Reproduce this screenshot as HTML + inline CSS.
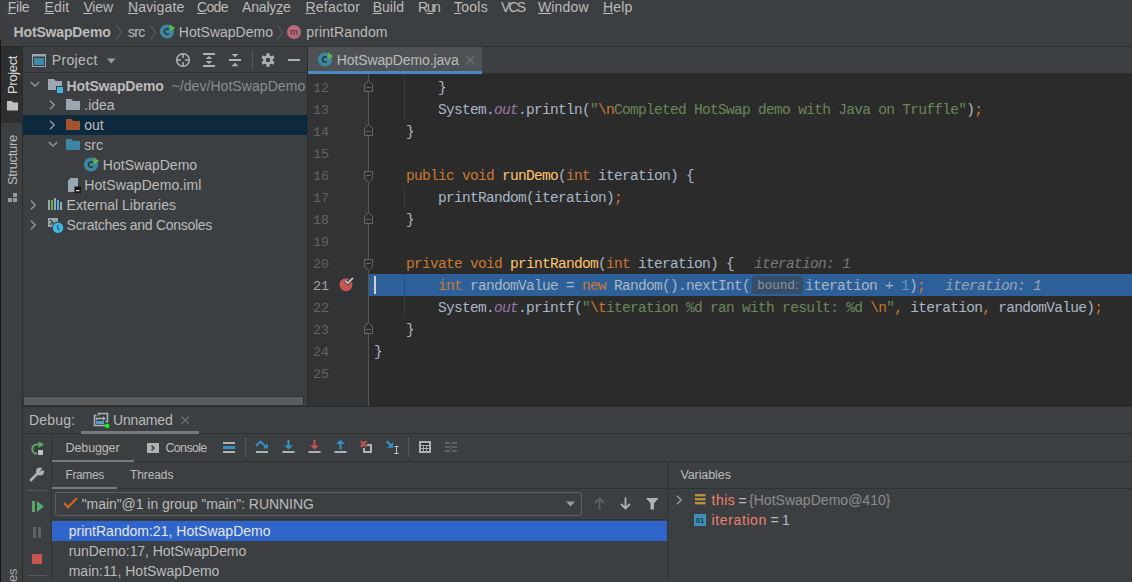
<!DOCTYPE html>
<html><head><meta charset="utf-8"><style>
html,body{margin:0;padding:0;}
body{width:1132px;height:582px;overflow:hidden;position:relative;background:#3c3f41;font-family:"Liberation Sans",sans-serif;}
.a{position:absolute;}
.t{white-space:pre;}
.m{font-family:"Liberation Mono",monospace;font-size:14.5px;letter-spacing:-0.7px;line-height:22px;white-space:pre;color:#a9b7c6;}
u{text-decoration:underline;text-underline-offset:1px;text-decoration-thickness:1px;}
svg{display:block;overflow:visible;}
</style></head><body>
<div class="a" style="left:0px;top:0px;width:1px;height:40px;background:#3d393c;"></div>
<div class="a t" style="left:7.70px;top:0px;font-size:14px;line-height:14px;color:#bbbbbb;letter-spacing:-0.233px;"><u>F</u>ile</div>
<div class="a t" style="left:44.40px;top:0px;font-size:14px;line-height:14px;color:#bbbbbb;letter-spacing:0.200px;"><u>E</u>dit</div>
<div class="a t" style="left:83.40px;top:0px;font-size:14px;line-height:14px;color:#bbbbbb;letter-spacing:-0.133px;"><u>V</u>iew</div>
<div class="a t" style="left:128.00px;top:0px;font-size:14px;line-height:14px;color:#bbbbbb;letter-spacing:0.143px;"><u>N</u>avigate</div>
<div class="a t" style="left:197.00px;top:0px;font-size:14px;line-height:14px;color:#bbbbbb;letter-spacing:-0.667px;"><u>C</u>ode</div>
<div class="a t" style="left:242.00px;top:0px;font-size:14px;line-height:14px;color:#bbbbbb;letter-spacing:-0.167px;">Analy<u>z</u>e</div>
<div class="a t" style="left:305.50px;top:0px;font-size:14px;line-height:14px;color:#bbbbbb;letter-spacing:0.214px;"><u>R</u>efactor</div>
<div class="a t" style="left:372.70px;top:0px;font-size:14px;line-height:14px;color:#bbbbbb;letter-spacing:0.025px;"><u>B</u>uild</div>
<div class="a t" style="left:417.90px;top:0px;font-size:14px;line-height:14px;color:#bbbbbb;letter-spacing:-1.350px;">R<u>u</u>n</div>
<div class="a t" style="left:454.00px;top:0px;font-size:14px;line-height:14px;color:#bbbbbb;letter-spacing:0.250px;"><u>T</u>ools</div>
<div class="a t" style="left:501.00px;top:0px;font-size:14px;line-height:14px;color:#bbbbbb;letter-spacing:-1.800px;">VCS</div>
<div class="a t" style="left:538.00px;top:0px;font-size:14px;line-height:14px;color:#bbbbbb;letter-spacing:0.140px;"><u>W</u>indow</div>
<div class="a t" style="left:603.00px;top:0px;font-size:14px;line-height:14px;color:#bbbbbb;letter-spacing:0.133px;"><u>H</u>elp</div>
<div class="a t" style="left:13.60px;top:25px;font-size:14px;line-height:14px;color:#bbbbbb;font-weight:bold;letter-spacing:-0.160px;">HotSwapDemo</div>
<svg class="a" style="left:116px;top:25px" width="8" height="15" viewBox="0 0 8 15"><path d="M0.5 0.5 L5.5 7.5 L0.5 14.5" fill="none" stroke="#5f6265" stroke-width="1"/></svg>
<div class="a t" style="left:128.00px;top:25px;font-size:14px;line-height:14px;color:#bbbbbb;letter-spacing:-0.700px;">src</div>
<svg class="a" style="left:150px;top:25px" width="8" height="15" viewBox="0 0 8 15"><path d="M0.5 0.5 L5.5 7.5 L0.5 14.5" fill="none" stroke="#5f6265" stroke-width="1"/></svg>
<svg class="a" style="left:159px;top:22.9px" width="17" height="17" viewBox="0 0 17 17"><circle cx="8" cy="8.5" r="7.1" fill="#3d87a1"/><path d="M9.7 6.5 A2.6 2.6 0 1 0 9.7 10.5" fill="none" stroke="#263238" stroke-width="1.3"/><path d="M10.8 1.3 L16.1 4.9 L10.8 8.5 Z" fill="#5fb641"/></svg>
<div class="a t" style="left:178.80px;top:25px;font-size:14px;line-height:14px;color:#bbbbbb;">HotSwapDemo</div>
<svg class="a" style="left:277px;top:25px" width="8" height="15" viewBox="0 0 8 15"><path d="M0.5 0.5 L5.5 7.5 L0.5 14.5" fill="none" stroke="#5f6265" stroke-width="1"/></svg>
<svg class="a" style="left:286px;top:24px" width="16" height="16" viewBox="0 0 16 16"><circle cx="8" cy="8" r="7" fill="#b86a7c"/><text x="8" y="11.3" font-family="Liberation Sans" font-size="9.5" fill="#3a2a2e" text-anchor="middle">m</text></svg>
<div class="a t" style="left:306.30px;top:25px;font-size:14px;line-height:14px;color:#bbbbbb;letter-spacing:0.100px;">printRandom</div>
<div class="a" style="left:0px;top:46px;width:1132px;height:1px;background:#323232;"></div>
<div class="a" style="left:1px;top:46px;width:22px;height:1px;background:#262626;"></div>
<div class="a" style="left:1px;top:47px;width:21px;height:536px;background:#3c3f41;"></div>
<div class="a" style="left:0px;top:40px;width:1px;height:542px;background:#151314;"></div>
<div class="a" style="left:22px;top:47px;width:1px;height:536px;background:#2b2b2b;"></div>
<div class="a" style="left:1px;top:47px;width:21px;height:76px;background:#2d2f30;"></div>
<div class="a t" style="left:6px;top:94px;font-size:13px;line-height:13px;color:#dadada;letter-spacing:-0.333px;transform:rotate(-90deg);transform-origin:0 0">Project</div>
<svg class="a" style="left:7px;top:101px" width="12" height="10" viewBox="0 0 12 10"><path d="M0 0 H5 L6 1.5 H11 V9.5 H0 Z" fill="#c0c0c0"/></svg>
<div class="a t" style="left:6px;top:185px;font-size:13px;line-height:13px;color:#bdbdbd;letter-spacing:-0.312px;transform:rotate(-90deg);transform-origin:0 0">Structure</div>
<svg class="a" style="left:8px;top:193px" width="10" height="9" viewBox="0 0 10 9"><rect x="5" y="0" width="4" height="4" fill="#9a9a9a"/><rect x="0" y="5" width="4" height="4" fill="#9a9a9a"/><rect x="5" y="5" width="4" height="4" fill="#9a9a9a"/></svg>
<div class="a t" style="left:6px;top:620px;font-size:13px;line-height:13px;color:#a8a8a8;letter-spacing:-0.250px;transform:rotate(-90deg);transform-origin:0 0">Favorites</div>
<div class="a" style="left:23px;top:47px;width:284px;height:359px;background:#3c3f41;"></div>
<div class="a" style="left:23px;top:72px;width:284px;height:1px;background:#323232;"></div>
<div class="a" style="left:307px;top:47px;width:1px;height:359px;background:#2b2b2b;"></div>
<svg class="a" style="left:32px;top:54px" width="14" height="13" viewBox="0 0 14 13"><rect x="0.5" y="0.5" width="13" height="12" fill="none" stroke="#9aa7b0" stroke-width="1"/><rect x="0.5" y="0.5" width="13" height="2" fill="#9aa7b0"/><rect x="2" y="4" width="10" height="7" fill="#3a8aaa"/></svg>
<div class="a t" style="left:51.80px;top:53px;font-size:14px;line-height:14px;color:#bbbbbb;letter-spacing:0.333px;">Project</div>
<svg class="a" style="left:107px;top:58px" width="9" height="6" viewBox="0 0 9 6"><path d="M0 0.5 H8.5 L4.25 5.5 Z" fill="#9a9da0"/></svg>
<svg class="a" style="left:175px;top:52px" width="16" height="16" viewBox="0 0 16 16"><circle cx="8" cy="8" r="6.3" fill="none" stroke="#afb1b3" stroke-width="1.5"/><path d="M8 1.5 V6 M8 10 V14.5 M1.5 8 H6 M10 8 H14.5" stroke="#afb1b3" stroke-width="1.5"/></svg>
<svg class="a" style="left:203px;top:53px" width="12" height="14" viewBox="0 0 12 14"><g fill="#afb1b3"><rect x="0" y="0" width="12" height="2"/><rect x="0" y="12" width="12" height="2"/><path d="M6 3 L9.3 6.1 H2.7 Z M2.7 8 H9.3 L6 10.9 Z"/></g></svg>
<svg class="a" style="left:229px;top:53px" width="12" height="14" viewBox="0 0 12 14"><g fill="#afb1b3"><rect x="0" y="6" width="12" height="2"/><path d="M2.6 1 H9.4 L6 4.3 Z M6 9.7 L9.4 13.2 H2.6 Z"/></g></svg>
<div class="a" style="left:252px;top:50px;width:1px;height:20px;background:#555859;"></div>
<svg class="a" style="left:261px;top:53px" width="14" height="14" viewBox="0 0 14 14"><g fill="#afb1b3"><circle cx="7" cy="7" r="4.7"/><rect x="5.4" y="0.2" width="3.2" height="3.5" rx="0.6" transform="rotate(0 7 7)"/><rect x="5.4" y="0.2" width="3.2" height="3.5" rx="0.6" transform="rotate(60 7 7)"/><rect x="5.4" y="0.2" width="3.2" height="3.5" rx="0.6" transform="rotate(120 7 7)"/><rect x="5.4" y="0.2" width="3.2" height="3.5" rx="0.6" transform="rotate(180 7 7)"/><rect x="5.4" y="0.2" width="3.2" height="3.5" rx="0.6" transform="rotate(240 7 7)"/><rect x="5.4" y="0.2" width="3.2" height="3.5" rx="0.6" transform="rotate(300 7 7)"/></g><circle cx="7" cy="7" r="2.3" fill="#3c3f41"/></svg>
<div class="a" style="left:288px;top:59px;width:12px;height:2px;background:#afb1b3;"></div>
<div class="a" style="left:23px;top:115px;width:284px;height:20px;background:#0d293e;"></div>
<svg class="a" style="left:30px;top:81px" width="10" height="7" viewBox="0 0 10 7"><path d="M0.8 1 L5 5.2 L9.2 1" fill="none" stroke="#9a9da0" stroke-width="1.3"/></svg>
<svg class="a" style="left:48px;top:79px" width="16" height="14" viewBox="0 0 16 14"><path d="M0 0 H6 L7.5 2 H14 V7 H8 V11 H0 Z" fill="#9aa7b0"/><rect x="9" y="8" width="6" height="6" fill="#40b6e0"/></svg>
<div class="a t" style="left:66.60px;top:79px;font-size:14px;line-height:14px;color:#bbbbbb;font-weight:bold;letter-spacing:-0.160px;">HotSwapDemo</div>
<div class="a t" style="left:171.50px;top:79px;font-size:14px;line-height:14px;color:#8a8d90;letter-spacing:0.062px;">~/dev/HotSwapDemo</div>
<svg class="a" style="left:49px;top:100px" width="7" height="10" viewBox="0 0 7 10"><path d="M1 0.8 L5.2 5 L1 9.2" fill="none" stroke="#9a9da0" stroke-width="1.3"/></svg>
<svg class="a" style="left:66px;top:99px" width="14" height="11" viewBox="0 0 14 11"><path d="M0 0 H5.5 L7 2 H14 V11 H0 Z" fill="#9aa7b0"/></svg>
<div class="a t" style="left:84.30px;top:98px;font-size:14px;line-height:14px;color:#bbbbbb;">.idea</div>
<svg class="a" style="left:49px;top:120px" width="7" height="10" viewBox="0 0 7 10"><path d="M1 0.8 L5.2 5 L1 9.2" fill="none" stroke="#9a9da0" stroke-width="1.3"/></svg>
<svg class="a" style="left:66px;top:119px" width="14" height="11" viewBox="0 0 14 11"><path d="M0 0 H5.5 L7 2 H14 V11 H0 Z" fill="#a3532d"/></svg>
<div class="a t" style="left:84.30px;top:118px;font-size:14px;line-height:14px;color:#bbbbbb;">out</div>
<svg class="a" style="left:48px;top:141px" width="10" height="7" viewBox="0 0 10 7"><path d="M0.8 1 L5 5.2 L9.2 1" fill="none" stroke="#9a9da0" stroke-width="1.3"/></svg>
<svg class="a" style="left:66px;top:139px" width="14" height="11" viewBox="0 0 14 11"><path d="M0 0 H5.5 L7 2 H14 V11 H0 Z" fill="#3c86a4"/></svg>
<div class="a t" style="left:84.30px;top:138px;font-size:14px;line-height:14px;color:#bbbbbb;">src</div>
<svg class="a" style="left:82.8px;top:155.9px" width="17" height="17" viewBox="0 0 17 17"><circle cx="8" cy="8.5" r="7.1" fill="#3d87a1"/><path d="M9.7 6.5 A2.6 2.6 0 1 0 9.7 10.5" fill="none" stroke="#263238" stroke-width="1.3"/><path d="M10.8 1.3 L16.1 4.9 L10.8 8.5 Z" fill="#5fb641"/></svg>
<div class="a t" style="left:102.80px;top:158px;font-size:14px;line-height:14px;color:#bbbbbb;letter-spacing:0.020px;">HotSwapDemo</div>
<svg class="a" style="left:68px;top:178px" width="13" height="15" viewBox="0 0 13 15"><path d="M2.5 0 H10 V14 H0 V2.5 Z" fill="#9aa7b0"/><path d="M0 2 L2 0" stroke="#3c3f41" stroke-width="1"/><rect x="6.5" y="8.5" width="6.5" height="6.5" fill="#161616"/><rect x="8" y="12" width="3.5" height="1.2" fill="#e0e0e0"/></svg>
<div class="a t" style="left:84.20px;top:178px;font-size:14px;line-height:14px;color:#bbbbbb;letter-spacing:0.093px;">HotSwapDemo.iml</div>
<svg class="a" style="left:30px;top:200px" width="7" height="10" viewBox="0 0 7 10"><path d="M1 0.8 L5.2 5 L1 9.2" fill="none" stroke="#9a9da0" stroke-width="1.3"/></svg>
<svg class="a" style="left:48px;top:198px" width="14" height="12" viewBox="0 0 14 12"><rect x="0" y="2" width="2" height="10" fill="#9aa7b0"/><rect x="3" y="2" width="2" height="10" fill="#62b543"/><rect x="6" y="0" width="2" height="12" fill="#9aa7b0"/><rect x="9" y="2" width="2" height="10" fill="#40b6e0"/><rect x="12" y="4" width="2" height="8" fill="#9aa7b0"/></svg>
<div class="a t" style="left:66.60px;top:198px;font-size:14px;line-height:14px;color:#bbbbbb;letter-spacing:0.024px;">External Libraries</div>
<svg class="a" style="left:30px;top:220px" width="7" height="10" viewBox="0 0 7 10"><path d="M1 0.8 L5.2 5 L1 9.2" fill="none" stroke="#9a9da0" stroke-width="1.3"/></svg>
<svg class="a" style="left:48px;top:218px" width="16" height="16" viewBox="0 0 16 16"><rect x="0" y="0" width="10" height="9" fill="#9aa7b0"/><path d="M1.8 1.8 L5 4.3 L1.8 6.8" fill="none" stroke="#3c3f41" stroke-width="1.2"/><circle cx="10" cy="9.7" r="6.3" fill="#3c3f41"/><circle cx="10" cy="9.7" r="5.3" fill="#40b6e0"/><path d="M9.6 7 V10.2 L11.6 12" fill="none" stroke="#2d5a6e" stroke-width="1.1"/></svg>
<div class="a t" style="left:66.60px;top:218px;font-size:14px;line-height:14px;color:#bbbbbb;letter-spacing:-0.286px;">Scratches and Consoles</div>
<div class="a" style="left:23px;top:396px;width:281px;height:10px;background:#323436;"></div>
<div class="a" style="left:24px;top:397px;width:279px;height:8px;background:#5a5c5e;"></div>
<div class="a" style="left:308px;top:47px;width:824px;height:27px;background:#3c3f41;"></div>
<div class="a" style="left:308px;top:47px;width:174px;height:24px;background:#4e5254;"></div>
<div class="a" style="left:308px;top:71px;width:174px;height:3px;background:#4a88c7;"></div>
<div class="a" style="left:482px;top:73px;width:650px;height:1px;background:#313131;"></div>
<svg class="a" style="left:316.5px;top:50.9px" width="17" height="17" viewBox="0 0 17 17"><circle cx="8" cy="8.5" r="7.1" fill="#3d87a1"/><path d="M9.7 6.5 A2.6 2.6 0 1 0 9.7 10.5" fill="none" stroke="#263238" stroke-width="1.3"/><path d="M10.8 1.3 L16.1 4.9 L10.8 8.5 Z" fill="#5fb641"/></svg>
<div class="a t" style="left:336.80px;top:53px;font-size:14px;line-height:14px;color:#bbbbbb;letter-spacing:-0.120px;">HotSwapDemo.java</div>
<svg class="a" style="left:466px;top:56px" width="9" height="9" viewBox="0 0 9 9"><path d="M0.5 0.5 L8 8 M8 0.5 L0.5 8" stroke="#6e7072" stroke-width="1.2"/></svg>
<div class="a" style="left:308px;top:74px;width:61px;height:332px;background:#313335;"></div>
<div class="a" style="left:369px;top:74px;width:763px;height:332px;background:#2b2b2b;"></div>
<div class="a" style="left:368px;top:74px;width:1px;height:332px;background:#555555;"></div>
<div class="a" style="left:369px;top:274px;width:763px;height:22px;background:#2d6099;"></div>
<div class="a" style="left:404px;top:74px;width:1px;height:46px;background:#393939;"></div>
<div class="a" style="left:404px;top:186px;width:1px;height:22px;background:#393939;"></div>
<div class="a" style="left:404px;top:274px;width:1px;height:44px;background:#393939;"></div>
<div class="a" style="left:404px;top:274px;width:1px;height:22px;background:#26507d;"></div>
<div class="a" style="left:374px;top:276px;width:2px;height:18px;background:#d0d0d0;"></div>
<svg class="a" style="left:364px;top:80px" width="9" height="12" viewBox="0 0 9 12"><defs><linearGradient id="fg" x1="0" x2="1"><stop offset="0.5" stop-color="#313335"/><stop offset="0.5" stop-color="#2b2b2b"/></linearGradient></defs><path d="M4.5 0.5 L8.5 4.2 V11.5 H0.5 V4.2 Z" fill="url(#fg)" stroke="#666767" stroke-width="1"/><path d="M2.3 7.5 H6.7" stroke="#666767" stroke-width="1"/></svg>
<svg class="a" style="left:364px;top:124px" width="9" height="12" viewBox="0 0 9 12"><defs><linearGradient id="fg" x1="0" x2="1"><stop offset="0.5" stop-color="#313335"/><stop offset="0.5" stop-color="#2b2b2b"/></linearGradient></defs><path d="M4.5 0.5 L8.5 4.2 V11.5 H0.5 V4.2 Z" fill="url(#fg)" stroke="#666767" stroke-width="1"/><path d="M2.3 7.5 H6.7" stroke="#666767" stroke-width="1"/></svg>
<svg class="a" style="left:364px;top:212px" width="9" height="12" viewBox="0 0 9 12"><defs><linearGradient id="fg" x1="0" x2="1"><stop offset="0.5" stop-color="#313335"/><stop offset="0.5" stop-color="#2b2b2b"/></linearGradient></defs><path d="M4.5 0.5 L8.5 4.2 V11.5 H0.5 V4.2 Z" fill="url(#fg)" stroke="#666767" stroke-width="1"/><path d="M2.3 7.5 H6.7" stroke="#666767" stroke-width="1"/></svg>
<svg class="a" style="left:364px;top:322px" width="9" height="12" viewBox="0 0 9 12"><defs><linearGradient id="fg" x1="0" x2="1"><stop offset="0.5" stop-color="#313335"/><stop offset="0.5" stop-color="#2b2b2b"/></linearGradient></defs><path d="M4.5 0.5 L8.5 4.2 V11.5 H0.5 V4.2 Z" fill="url(#fg)" stroke="#666767" stroke-width="1"/><path d="M2.3 7.5 H6.7" stroke="#666767" stroke-width="1"/></svg>
<svg class="a" style="left:364px;top:171px" width="9" height="12" viewBox="0 0 9 12"><path d="M0.5 0.5 H8.5 V7.8 L4.5 11.5 L0.5 7.8 Z" fill="url(#fg)" stroke="#666767" stroke-width="1"/><path d="M2.3 4.5 H6.7" stroke="#666767" stroke-width="1"/></svg>
<svg class="a" style="left:364px;top:259px" width="9" height="12" viewBox="0 0 9 12"><path d="M0.5 0.5 H8.5 V7.8 L4.5 11.5 L0.5 7.8 Z" fill="url(#fg)" stroke="#666767" stroke-width="1"/><path d="M2.3 4.5 H6.7" stroke="#666767" stroke-width="1"/></svg>
<div class="a m" style="left:313px;top:78px;color:#606366;font-size:13.333px;letter-spacing:0">12</div>
<div class="a m" style="left:313px;top:100px;color:#606366;font-size:13.333px;letter-spacing:0">13</div>
<div class="a m" style="left:313px;top:122px;color:#606366;font-size:13.333px;letter-spacing:0">14</div>
<div class="a m" style="left:313px;top:144px;color:#606366;font-size:13.333px;letter-spacing:0">15</div>
<div class="a m" style="left:313px;top:166px;color:#606366;font-size:13.333px;letter-spacing:0">16</div>
<div class="a m" style="left:313px;top:188px;color:#606366;font-size:13.333px;letter-spacing:0">17</div>
<div class="a m" style="left:313px;top:210px;color:#606366;font-size:13.333px;letter-spacing:0">18</div>
<div class="a m" style="left:313px;top:232px;color:#606366;font-size:13.333px;letter-spacing:0">19</div>
<div class="a m" style="left:313px;top:254px;color:#606366;font-size:13.333px;letter-spacing:0">20</div>
<div class="a m" style="left:313px;top:276px;color:#a4a3a3;font-size:13.333px;letter-spacing:0">21</div>
<div class="a m" style="left:313px;top:298px;color:#606366;font-size:13.333px;letter-spacing:0">22</div>
<div class="a m" style="left:313px;top:320px;color:#606366;font-size:13.333px;letter-spacing:0">23</div>
<div class="a m" style="left:313px;top:342px;color:#606366;font-size:13.333px;letter-spacing:0">24</div>
<div class="a m" style="left:313px;top:364px;color:#606366;font-size:13.333px;letter-spacing:0">25</div>
<svg class="a" style="left:338px;top:275px" width="17" height="17" viewBox="0 0 17 17"><circle cx="8" cy="9.7" r="6.5" fill="#c75450"/><path d="M7 5.6 L9.7 8.2 L15 2.8" fill="none" stroke="#2b2b2b" stroke-width="3.4"/><path d="M7 5.6 L9.7 8.2 L15 2.8" fill="none" stroke="#c8c8c8" stroke-width="1.7"/></svg>
<div class="a m" style="left:374px;top:77px"><span style="color:#a9b7c6;">        }</span></div>
<div class="a m" style="left:374px;top:99px"><span style="color:#a9b7c6;">        System.</span><span style="color:#9876aa;font-style:italic">out</span><span style="color:#a9b7c6;">.println(</span><span style="color:#6a8759;">&quot;</span><span style="color:#cc7832;">\n</span><span style="color:#6a8759;">Completed HotSwap demo with Java on Truffle&quot;</span><span style="color:#a9b7c6;">)</span><span style="color:#cc7832;">;</span></div>
<div class="a m" style="left:374px;top:121px"><span style="color:#a9b7c6;">    }</span></div>
<div class="a m" style="left:374px;top:165px"><span style="color:#a9b7c6;">    </span><span style="color:#cc7832;">public void </span><span style="color:#ffc66d;">runDemo</span><span style="color:#a9b7c6;">(</span><span style="color:#cc7832;">int </span><span style="color:#a9b7c6;">iteration) {</span></div>
<div class="a m" style="left:374px;top:187px"><span style="color:#a9b7c6;">        printRandom(iteration)</span><span style="color:#cc7832;">;</span></div>
<div class="a m" style="left:374px;top:209px"><span style="color:#a9b7c6;">    }</span></div>
<div class="a m" style="left:374px;top:253px"><span style="color:#a9b7c6;">    </span><span style="color:#cc7832;">private void </span><span style="color:#ffc66d;">printRandom</span><span style="color:#a9b7c6;">(</span><span style="color:#cc7832;">int </span><span style="color:#a9b7c6;">iteration) {</span></div>
<div class="a m" style="left:374px;top:275px"><span style="color:#a9b7c6;">        </span><span style="color:#cc7832;">int </span><span style="color:#a9b7c6;">randomValue = </span><span style="color:#cc7832;">new </span><span style="color:#a9b7c6;">Random().nextInt(</span></div>
<div class="a m" style="left:374px;top:297px"><span style="color:#a9b7c6;">        System.</span><span style="color:#9876aa;font-style:italic">out</span><span style="color:#a9b7c6;">.printf(</span><span style="color:#6a8759;">&quot;</span><span style="color:#cc7832;">\t</span><span style="color:#6a8759;">iteration %d ran with result: %d </span><span style="color:#cc7832;">\n</span><span style="color:#6a8759;">&quot;</span><span style="color:#cc7832;">, </span><span style="color:#a9b7c6;">iteration</span><span style="color:#cc7832;">, </span><span style="color:#a9b7c6;">randomValue)</span><span style="color:#cc7832;">;</span></div>
<div class="a m" style="left:374px;top:319px"><span style="color:#a9b7c6;">    }</span></div>
<div class="a m" style="left:374px;top:341px"><span style="color:#a9b7c6;">}</span></div>
<div class="a" style="left:752px;top:276px;width:51px;height:18px;border-radius:3px;background:#354d69"></div>
<div class="a t" style="left:757.50px;top:279px;font-size:12.5px;line-height:12.5px;color:#8e9399;letter-spacing:0.600px;">bound:</div>
<div class="a m" style="left:805px;top:275px"><span style="color:#a9b7c6;">iteration + </span><span style="color:#6897bb;">1</span><span style="color:#a9b7c6;">)</span><span style="color:#cc7832;">;</span></div>
<div class="a m" style="left:945px;top:275px;color:#9aa6b4;font-style:italic">iteration: 1</div>
<div class="a m" style="left:754px;top:253px;color:#787878;font-style:italic">iteration: 1</div>
<div class="a" style="left:23px;top:406px;width:1109px;height:1px;background:#2c2c2c;"></div>
<div class="a" style="left:23px;top:407px;width:1109px;height:175px;background:#3c3f41;"></div>
<div class="a" style="left:23px;top:433px;width:1109px;height:1px;background:#323232;"></div>
<div class="a t" style="left:29.00px;top:413px;font-size:14px;line-height:14px;color:#bbbbbb;letter-spacing:0.200px;">Debug:</div>
<svg class="a" style="left:93px;top:412px" width="17" height="17" viewBox="0 0 17 17"><g fill="none" stroke="#a9b3b9" stroke-width="1.5"><path d="M5.5 3.5 V1.5 H14.5 V9.5 H12.5"/><path d="M3.5 3.5 H1.5 V13.5 H12.5"/><path d="M3.5 8 V6.5 H10.5"/></g><path d="M10 4.2 L12.8 6.5 L10 8.8 Z" fill="#a9b3b9"/><rect x="3" y="9" width="8" height="3" fill="#4a9fc4"/><circle cx="14.2" cy="13.9" r="2.4" fill="#1ee61e"/></svg>
<div class="a t" style="left:113.00px;top:413px;font-size:14px;line-height:14px;color:#bbbbbb;letter-spacing:-0.167px;">Unnamed</div>
<svg class="a" style="left:181px;top:416px" width="9" height="9" viewBox="0 0 9 9"><path d="M0.5 0.5 L8 8 M8 0.5 L0.5 8" stroke="#6e7072" stroke-width="1.1"/></svg>
<div class="a" style="left:81px;top:431px;width:118px;height:3px;background:#747a80;"></div>
<div class="a" style="left:51px;top:434px;width:1px;height:148px;background:#323232;"></div>
<svg class="a" style="left:30px;top:440px" width="16" height="16" viewBox="0 0 16 16"><path d="M9.5 4.5 H7 A4.6 4.6 0 0 0 7 13.8" fill="none" stroke="#59a869" stroke-width="2.2"/><path d="M8.6 1.2 L14.2 4.5 L8.6 8 Z" fill="#59a869"/><rect x="8" y="10" width="5" height="5" fill="#c0c0c0"/></svg>
<svg class="a" style="left:29px;top:467px" width="16" height="15" viewBox="0 0 16 15"><path d="M2 13 L8.5 6.5" stroke="#afb1b3" stroke-width="2.6" stroke-linecap="round"/><path d="M8 3.2 A3.6 3.6 0 1 0 12.3 7.3 L14 5.3 V7 A5 5 0 0 1 11 9.5" fill="none" stroke="#afb1b3" stroke-width="0"/><circle cx="11" cy="4.5" r="4" fill="#afb1b3"/><path d="M11 4.5 L14 0 L16 2.5 Z" fill="#3c3f41"/></svg>
<div class="a" style="left:27px;top:490px;width:20px;height:1px;background:#555859;"></div>
<svg class="a" style="left:32px;top:501px" width="13" height="12" viewBox="0 0 13 12"><rect x="0" y="0" width="3" height="11" fill="#59a869"/><path d="M5 0 L12 5.5 L5 11 Z" fill="#59a869"/></svg>
<div class="a" style="left:33px;top:527px;width:3px;height:11px;background:#5f6163;"></div>
<div class="a" style="left:38px;top:527px;width:3px;height:11px;background:#5f6163;"></div>
<div class="a" style="left:32px;top:554px;width:10px;height:10px;background:#c75450;"></div>
<div class="a" style="left:27px;top:575px;width:20px;height:1px;background:#555859;"></div>
<div class="a" style="left:52px;top:461px;width:1080px;height:1px;background:#323232;"></div>
<div class="a t" style="left:65.60px;top:442px;font-size:12.5px;line-height:12.5px;color:#bbbbbb;letter-spacing:-0.129px;">Debugger</div>
<div class="a" style="left:52px;top:460px;width:82px;height:2px;background:#747a80;"></div>
<svg class="a" style="left:147px;top:443px" width="12" height="10" viewBox="0 0 12 10"><rect width="12" height="10" fill="#afb1b3"/><path d="M4.5 2.5 L7 5 L4.5 7.5" fill="none" stroke="#3c3f41" stroke-width="1.5"/></svg>
<div class="a t" style="left:165.50px;top:442px;font-size:12.5px;line-height:12.5px;color:#bbbbbb;letter-spacing:-0.683px;">Console</div>
<div class="a" style="left:223px;top:442px;width:12px;height:2px;background:#afb1b3;"></div>
<div class="a" style="left:223px;top:446px;width:12px;height:3px;background:#3592c4;"></div>
<div class="a" style="left:223px;top:451px;width:12px;height:2px;background:#afb1b3;"></div>
<div class="a" style="left:245px;top:437px;width:1px;height:20px;background:#555859;"></div>
<svg class="a" style="left:255px;top:440px" width="16" height="15" viewBox="0 0 16 15"><path d="M1 6 L5.5 1.5 L10.5 6.5" fill="none" stroke="#3592c4" stroke-width="1.8"/><path d="M8 8.5 H13 V3.5 Z" fill="#3592c4"/><rect x="1" y="11" width="12" height="2" fill="#afb1b3"/></svg>
<svg class="a" style="left:282px;top:439px" width="14" height="15" viewBox="0 0 14 15"><rect x="5.5" y="1" width="2" height="6" fill="#3592c4"/><path d="M2 6.5 H11 L6.5 10.5 Z" fill="#3592c4"/><rect x="0.5" y="12" width="12" height="2" fill="#afb1b3"/></svg>
<svg class="a" style="left:308px;top:439px" width="14" height="15" viewBox="0 0 14 15"><rect x="5.5" y="1" width="2" height="6" fill="#c75450"/><path d="M2 6.5 H11 L6.5 10.5 Z" fill="#c75450"/><rect x="0.5" y="12" width="12" height="2" fill="#afb1b3"/></svg>
<svg class="a" style="left:334px;top:439px" width="14" height="15" viewBox="0 0 14 15"><rect x="5.5" y="4.5" width="2" height="6" fill="#3592c4"/><path d="M2 5 H11 L6.5 1 Z" fill="#3592c4"/><rect x="0.5" y="12" width="12" height="2" fill="#afb1b3"/></svg>
<svg class="a" style="left:359px;top:440px" width="14" height="14" viewBox="0 0 14 14"><path d="M5 8 V12 H12 V5 H8" fill="none" stroke="#afb1b3" stroke-width="2"/><path d="M1.8 1.3 L7.2 6.7 M7.2 1.3 L1.8 6.7" stroke="#c75450" stroke-width="2"/></svg>
<svg class="a" style="left:385px;top:440px" width="16" height="15" viewBox="0 0 16 15"><path d="M2.2 1.7 L6.5 6" stroke="#3592c4" stroke-width="2.2" stroke-linecap="round"/><path d="M8.1 1.9 V7.8 H2.2 Z" fill="#3592c4"/><path d="M9.3 6.5 H13.7 M11.5 6.5 V13.5 M9.3 13.5 H13.7" fill="none" stroke="#c0c0c0" stroke-width="1.1"/></svg>
<div class="a" style="left:408px;top:437px;width:1px;height:20px;background:#555859;"></div>
<svg class="a" style="left:419px;top:441px" width="12" height="12" viewBox="0 0 12 12"><rect width="12" height="12" fill="#afb1b3"/><g fill="#2e2f30"><rect x="2" y="2" width="8" height="2"/><rect x="2" y="5" width="2" height="2"/><rect x="5" y="5" width="2" height="2"/><rect x="8" y="5" width="2" height="2"/><rect x="2" y="8" width="2" height="2"/><rect x="5" y="8" width="2" height="2"/><rect x="8" y="8" width="2" height="2"/></g></svg>
<svg class="a" style="left:445px;top:441px" width="13" height="13" viewBox="0 0 13 13"><g fill="#5e6062"><rect x="0" y="1" width="5" height="2"/><rect x="7" y="1" width="5" height="2"/><rect x="0" y="5" width="5" height="2"/><rect x="7" y="5" width="5" height="2"/><rect x="0" y="9" width="5" height="2"/><rect x="7" y="9" width="5" height="2"/></g><path d="M7 2 C5.5 2 6 10 4 10" fill="none" stroke="#5e6062" stroke-width="1"/></svg>
<div class="a" style="left:52px;top:488px;width:615px;height:1px;background:#323232;"></div>
<div class="a t" style="left:65.60px;top:469px;font-size:12px;line-height:12px;color:#bbbbbb;letter-spacing:-0.420px;">Frames</div>
<div class="a t" style="left:130.00px;top:469px;font-size:12px;line-height:12px;color:#bbbbbb;letter-spacing:-0.100px;">Threads</div>
<div class="a" style="left:52px;top:487px;width:65px;height:2px;background:#747a80;"></div>
<div class="a" style="left:55px;top:492px;width:525px;height:22px;border:1px solid #5e6060;border-radius:3px;background:#3c3f41"></div>
<svg class="a" style="left:63px;top:497px" width="15" height="12" viewBox="0 0 15 12"><path d="M1 6 L5 10 L14 1" fill="none" stroke="#cf6327" stroke-width="2.3"/></svg>
<div class="a t" style="left:81.70px;top:497px;font-size:14px;line-height:14px;color:#bbbbbb;letter-spacing:-0.059px;">&quot;main&quot;@1 in group &quot;main&quot;: RUNNING</div>
<svg class="a" style="left:566px;top:501px" width="10" height="6" viewBox="0 0 10 6"><path d="M0 0.5 H9 L4.5 5.5 Z" fill="#9a9da0"/></svg>
<svg class="a" style="left:594px;top:497px" width="12" height="13" viewBox="0 0 12 13"><path d="M5.5 12.5 V1.5 M1 6 L5.5 1.5 L10 6" fill="none" stroke="#5e6062" stroke-width="1.8"/></svg>
<svg class="a" style="left:620px;top:497px" width="12" height="13" viewBox="0 0 12 13"><path d="M5.5 0.5 V11.5 M1 7 L5.5 11.5 L10 7" fill="none" stroke="#afb1b3" stroke-width="1.8"/></svg>
<svg class="a" style="left:646px;top:497px" width="13" height="13" viewBox="0 0 13 13"><path d="M0 1 H12.5 L8 6.5 V12.5 H4.5 V6.5 Z" fill="#afb1b3"/></svg>
<div class="a" style="left:52px;top:519px;width:615px;height:1px;background:#323232;"></div>
<div class="a" style="left:52px;top:521px;width:615px;height:20px;background:#2f65ca;"></div>
<div class="a t" style="left:68.70px;top:524px;font-size:14px;line-height:14px;color:#e6e6e6;letter-spacing:0.012px;">printRandom:21, HotSwapDemo</div>
<div class="a t" style="left:68.70px;top:544px;font-size:14px;line-height:14px;color:#bbbbbb;letter-spacing:-0.064px;">runDemo:17, HotSwapDemo</div>
<div class="a t" style="left:68.70px;top:564px;font-size:14px;line-height:14px;color:#bbbbbb;">main:11, HotSwapDemo</div>
<div class="a" style="left:667px;top:462px;width:1px;height:120px;background:#323232;"></div>
<div class="a" style="left:668px;top:488px;width:464px;height:1px;background:#323232;"></div>
<div class="a t" style="left:680.40px;top:469px;font-size:12.5px;line-height:12.5px;color:#bbbbbb;letter-spacing:-0.087px;">Variables</div>
<svg class="a" style="left:676px;top:495px" width="7" height="10" viewBox="0 0 7 10"><path d="M1 0.8 L5.2 5 L1 9.2" fill="none" stroke="#9a9da0" stroke-width="1.3"/></svg>
<svg class="a" style="left:695px;top:494px" width="11" height="11" viewBox="0 0 11 11"><rect x="0" y="0" width="10.5" height="2.4" fill="#b8913e"/><rect x="0" y="4" width="10.5" height="2.4" fill="#b8913e"/><rect x="0" y="8" width="10.5" height="2.4" fill="#b8913e"/></svg>
<div class="a t" style="left:711.60px;top:493px;font-size:14px;line-height:14px;color:#ef7f6f;letter-spacing:0.467px;">this</div>
<div class="a t" style="left:738.50px;top:494px;font-size:14px;line-height:14px;color:#bbbbbb;">=</div>
<div class="a t" style="left:749.00px;top:493px;font-size:14px;line-height:14px;color:#8c8c8c;letter-spacing:0.025px;">{HotSwapDemo@410}</div>
<svg class="a" style="left:694px;top:514px" width="12" height="12" viewBox="0 0 12 12"><rect width="12" height="12" fill="#3d8fb5"/><text x="6" y="9" font-family="Liberation Sans" font-size="7.5" font-weight="bold" fill="#1d3a4a" text-anchor="middle">01</text></svg>
<div class="a t" style="left:711.60px;top:513px;font-size:14px;line-height:14px;color:#ef7f6f;letter-spacing:0.612px;">iteration</div>
<div class="a t" style="left:770.40px;top:513px;font-size:14px;line-height:14px;color:#bbbbbb;">=</div>
<div class="a t" style="left:782.00px;top:513px;font-size:14px;line-height:14px;color:#bbbbbb;">1</div>
</body></html>
